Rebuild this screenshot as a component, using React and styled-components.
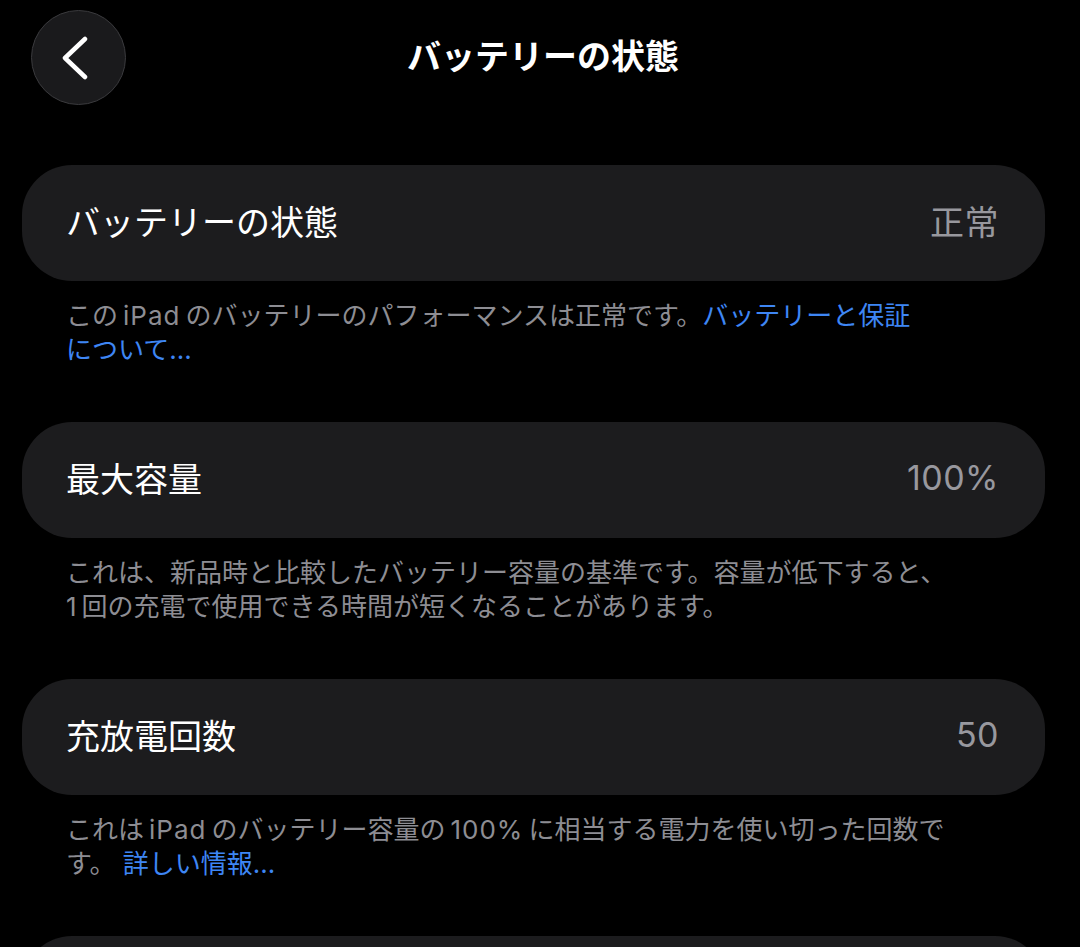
// Battery health settings screen (iPad, dark mode)
import React from 'react';
import styled, { createGlobalStyle } from 'styled-components';

const BackIcon = () => (
  <svg width="30" height="44" viewBox="0 0 30 44" fill="none">
    <path d="M24 3 L4 22 L24 41" stroke="#fff" strokeWidth="4.5" strokeLinecap="round" strokeLinejoin="round" />
  </svg>
);

// rows are built inside a function so the styled parts below exist by the time they're used
const getRows = () => [
  {
    label: 'バッテリーの状態',
    value: '正常',
    note: (
      <>
        この<Latin>iPad</Latin>のバッテリーのパフォーマンスは正常です。<Link>バッテリーと保証</Link>
        <br />
        <Link>について...</Link>
      </>
    ),
  },
  {
    label: '最大容量',
    value: '100%',
    note: (
      <>
        これは、新品時と比較したバッテリー容量の基準です。容量が低下すると、
        <br />
        <Latin $start>1</Latin>回の充電で使用できる時間が短くなることがあります。
      </>
    ),
  },
  {
    label: '充放電回数',
    value: '50',
    note: (
      <>
        これは<Latin>iPad</Latin>のバッテリー容量の<Latin>100%</Latin>に相当する電力を使い切った回数で
        <br />
        す。 <Link>詳しい情報...</Link>
      </>
    ),
  },
];

const App = () => {
  const rows = getRows();
  return (
    <Page>
      <GlobalStyle />
      <Header>
        <BackButton aria-label="戻る">
          <BackIcon />
        </BackButton>
        <Title>バッテリーの状態</Title>
      </Header>

      <List>
        {rows.map((row) => (
          <Section key={row.label}>
            <Card>
              <Label>{row.label}</Label>
              <Value>{row.value}</Value>
            </Card>
            <Footnote>{row.note}</Footnote>
          </Section>
        ))}
        {/* next card peeks in at the bottom edge */}
        <Card />
      </List>
    </Page>
  );
};

/*----------- Styled Components ----------*/
const GlobalStyle = createGlobalStyle`
  html, body {
    margin: 0;
    padding: 0;
    background: #000000;
  }
  body {
    font-family: Inter, "Noto Sans CJK JP", "Noto Sans", sans-serif;
    color: #ffffff;
    overflow: hidden;
  }
`;

const Page = styled.div`
  width: 1080px;
  height: 947px;
  background: #000000;
  overflow: hidden;
`;

const Header = styled.header`
  position: relative;
  height: 114px;
  display: flex;
  align-items: center;
  justify-content: center;
`;

const BackButton = styled.button`
  position: absolute;
  left: 31px;
  top: 10px;
  width: 95px;
  height: 95px;
  border-radius: 50%;
  background: #1a1a1c;
  border: 1.5px solid #3a3a3d;
  display: flex;
  align-items: center;
  justify-content: center;
  padding: 0 6px 0 0;
  cursor: pointer;
`;

const Title = styled.h1`
  margin: 0 0 6px 6px;
  font-size: 34px;
  font-weight: 700;
  color: #ffffff;
`;

const List = styled.div`
  display: flex;
  flex-direction: column;
  padding: 51px 35px 0 22px;
`;

const Section = styled.section`
  display: flex;
  flex-direction: column;
  margin-bottom: 55px;
`;

const Card = styled.div`
  height: 116px;
  box-sizing: border-box;
  border-radius: 50px;
  background: #1c1c1e;
  display: flex;
  align-items: center;
  justify-content: space-between;
  padding: 0 46px 6px 44px;
`;

const Label = styled.span`
  font-size: 34px;
  font-weight: 400;
  color: #ffffff;
`;

const Value = styled.span`
  font-size: 34px;
  font-weight: 400;
  color: #98989e;
  letter-spacing: 0.5px;
`;

const Footnote = styled.p`
  margin: 18px 0 0 44px;
  font-size: 26px;
  line-height: 34px;
  color: #8d8d93;
  white-space: nowrap;
`;

const Latin = styled.span`
  letter-spacing: 1px;
  margin: ${(p) => (p.$start ? '0 4px 0 0' : '0 5px')};
`;

const Link = styled.span`
  color: #3e86f4;
`;

export default App;
